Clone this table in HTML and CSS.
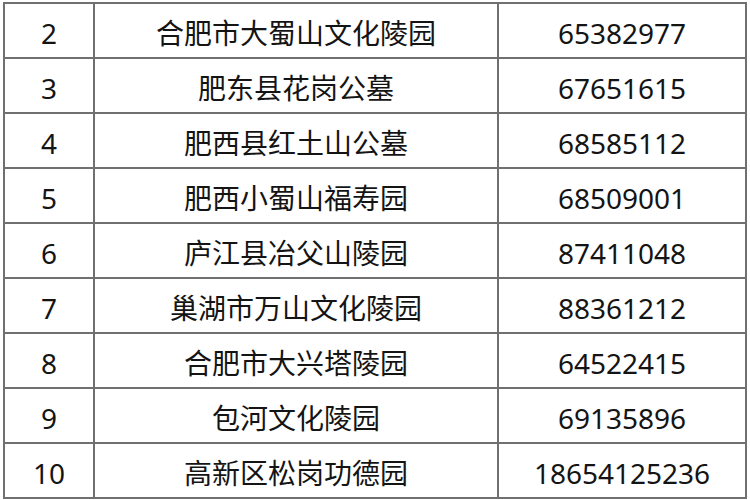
FILE: index.html
```html
<!DOCTYPE html>
<html lang="zh">
<head>
<meta charset="utf-8">
<link rel="stylesheet" href="styles.css">
</head>
<body>
<div class="table">
  <div class="cell num">2</div><div class="cell">合肥市大蜀山文化陵园</div><div class="cell num">65382977</div>
  <div class="cell num">3</div><div class="cell">肥东县花岗公墓</div><div class="cell num">67651615</div>
  <div class="cell num">4</div><div class="cell">肥西县红土山公墓</div><div class="cell num">68585112</div>
  <div class="cell num">5</div><div class="cell">肥西小蜀山福寿园</div><div class="cell num">68509001</div>
  <div class="cell num">6</div><div class="cell">庐江县冶父山陵园</div><div class="cell num">87411048</div>
  <div class="cell num">7</div><div class="cell">巢湖市万山文化陵园</div><div class="cell num">88361212</div>
  <div class="cell num">8</div><div class="cell">合肥市大兴塔陵园</div><div class="cell num">64522415</div>
  <div class="cell num">9</div><div class="cell">包河文化陵园</div><div class="cell num">69135896</div>
  <div class="cell num">10</div><div class="cell">高新区松岗功德园</div><div class="cell num">18654125236</div>
</div>
</body>
</html>
```
FILE: styles.css
```css
html, body {
  margin: 0;
  padding: 0;
  background: #ffffff;
}
body {
  width: 750px;
  height: 500px;
  overflow: hidden;
  font-family: "Noto Sans CJK SC", "Noto Sans", sans-serif;
}
.table {
  margin: 2px 0 0 3px;
  width: 744px;
  box-sizing: border-box;
  display: grid;
  grid-template-columns: 88px 402px 246px;
  grid-auto-rows: 53px;
  gap: 2px;
  padding: 2px;
  background: #707070;
}
.cell {
  background: #ffffff;
  color: #141414;
  font-size: 28px;
  display: flex;
  align-items: center;
  justify-content: center;
  padding-top: 2px;
  box-sizing: border-box;
}
.num {
  font-family: "Noto Sans", "Noto Sans CJK SC", sans-serif;
  font-size: 28px;
  padding-top: 4px;
}
```
